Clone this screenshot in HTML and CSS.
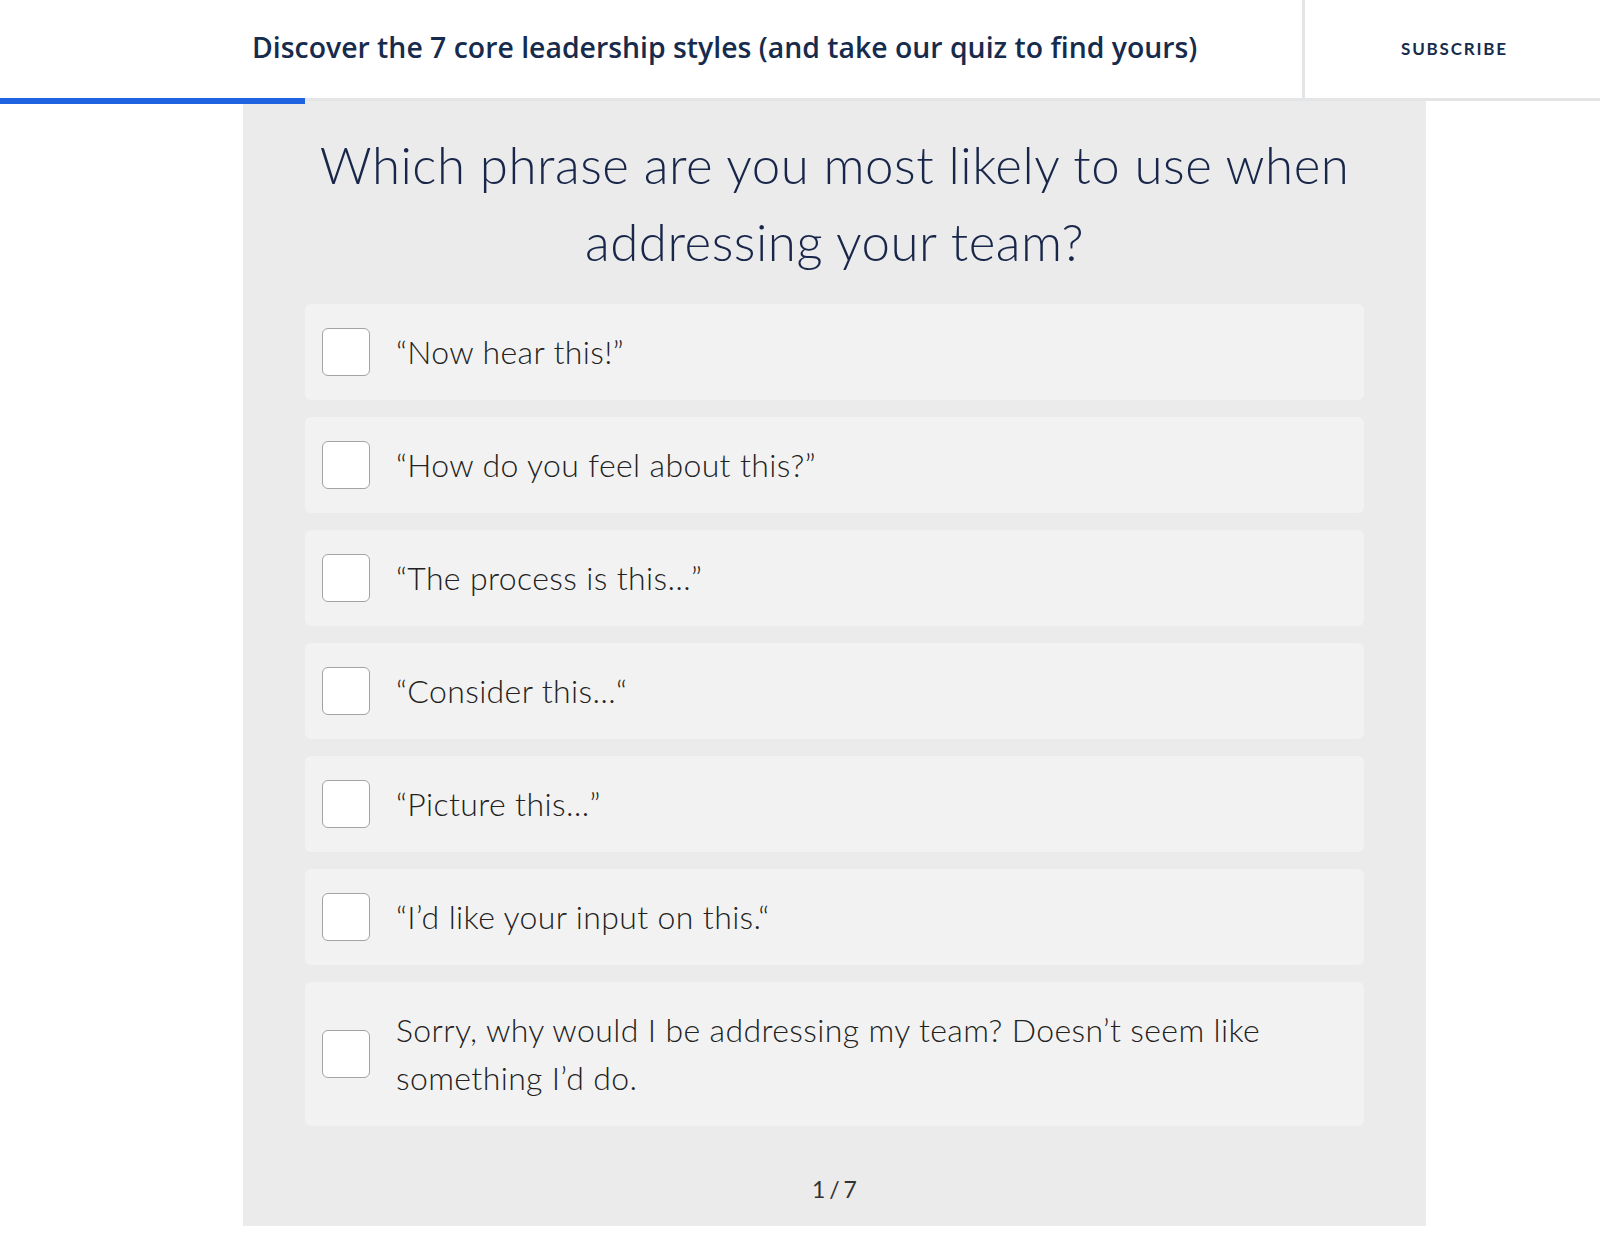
FILE: index.html
```html
<!DOCTYPE html>
<html lang="en">
<head>
<meta charset="utf-8">
<title>Leadership styles quiz</title>
<link rel="stylesheet" href="styles.css">
</head>
<body>
<header class="topbar">
  <div class="title-wrap">
    <h1 class="title">Discover the 7 core leadership styles (and take our quiz to find yours)</h1>
  </div>
  <div class="subscribe-wrap">
    <a class="subscribe" href="#">SUBSCRIBE</a>
  </div>
  <div class="progress"></div>
</header>
<main class="quiz">
  <h2 class="question">Which phrase are you most likely to use when addressing your team?</h2>
  <ul class="options">
    <li class="option"><span class="box"></span><span class="label">“Now hear this!”</span></li>
    <li class="option"><span class="box"></span><span class="label">“How do you feel about this?”</span></li>
    <li class="option"><span class="box"></span><span class="label">“The process is this…”</span></li>
    <li class="option"><span class="box"></span><span class="label">“Consider this…“</span></li>
    <li class="option"><span class="box"></span><span class="label">“Picture this…”</span></li>
    <li class="option"><span class="box"></span><span class="label">“I’d like your input on this.“</span></li>
    <li class="option"><span class="box"></span><span class="label">Sorry, why would I be addressing my team? Doesn’t seem like something I’d do.</span></li>
  </ul>
  <div class="counter">1 / 7</div>
</main>
</body>
</html>
```
FILE: styles.css
```css
* { box-sizing: border-box; }
html, body { margin: 0; padding: 0; background: #ffffff; }
body { font-family: "Lato", "Liberation Sans", sans-serif; }

.topbar {
  position: relative;
  display: flex;
  height: 101px;
  border-bottom: 3px solid #e4e5e7;
  background: #ffffff;
}
.title-wrap {
  flex: 0 0 1305px;
  display: flex;
  align-items: center;
  padding-left: 252px;
  padding-bottom: 5px;
  border-right: 3px solid #e4e5e7;
}
.title {
  margin: 0;
  font-family: "Open Sans", "Lato", sans-serif;
  font-weight: 600;
  font-size: 28.4px;
  letter-spacing: 0;
  color: #172b4d;
  white-space: nowrap;
}
.subscribe-wrap {
  flex: 1;
  display: flex;
  align-items: center;
  justify-content: center;
  padding-left: 4px;
  padding-bottom: 2px;
}
.subscribe {
  font-family: "Lato", sans-serif;
  font-weight: 700;
  font-size: 17px;
  letter-spacing: 1.8px;
  color: #172b4d;
  text-decoration: none;
}
.progress {
  position: absolute;
  left: 0;
  top: 98px;
  width: 305px;
  height: 6px;
  background: #1f63e3;
}

.quiz {
  width: 1183px;
  margin-left: 243px;
  background: #ebebeb;
  padding: 25px 62px 22px;
}
.question {
  margin: 0 0 24px;
  text-align: center;
  font-family: "Lato", sans-serif;
  font-weight: 300;
  font-size: 51px;
  line-height: 77px;
  letter-spacing: 0.5px;
  color: #18264a;
}
.options {
  list-style: none;
  margin: 0;
  padding: 0;
  display: flex;
  flex-direction: column;
  gap: 17px;
}
.option {
  display: flex;
  align-items: center;
  gap: 26px;
  padding: 24px 40px 24px 17px;
  background: #f2f2f2;
  border-radius: 6px;
}
.box {
  flex: 0 0 48px;
  width: 48px;
  height: 48px;
  background: #ffffff;
  border: 1.5px solid #a3a3a3;
  border-radius: 6px;
}
.label {
  font-family: "Lato", sans-serif;
  font-weight: 300;
  font-size: 32px;
  line-height: 48px;
  letter-spacing: 0.37px;
  color: #222222;
}
.counter {
  margin-top: 48px;
  text-align: center;
  font-family: "Lato", sans-serif;
  font-size: 23px;
  line-height: 30px;
  word-spacing: -2px;
  color: #333333;
}
```
